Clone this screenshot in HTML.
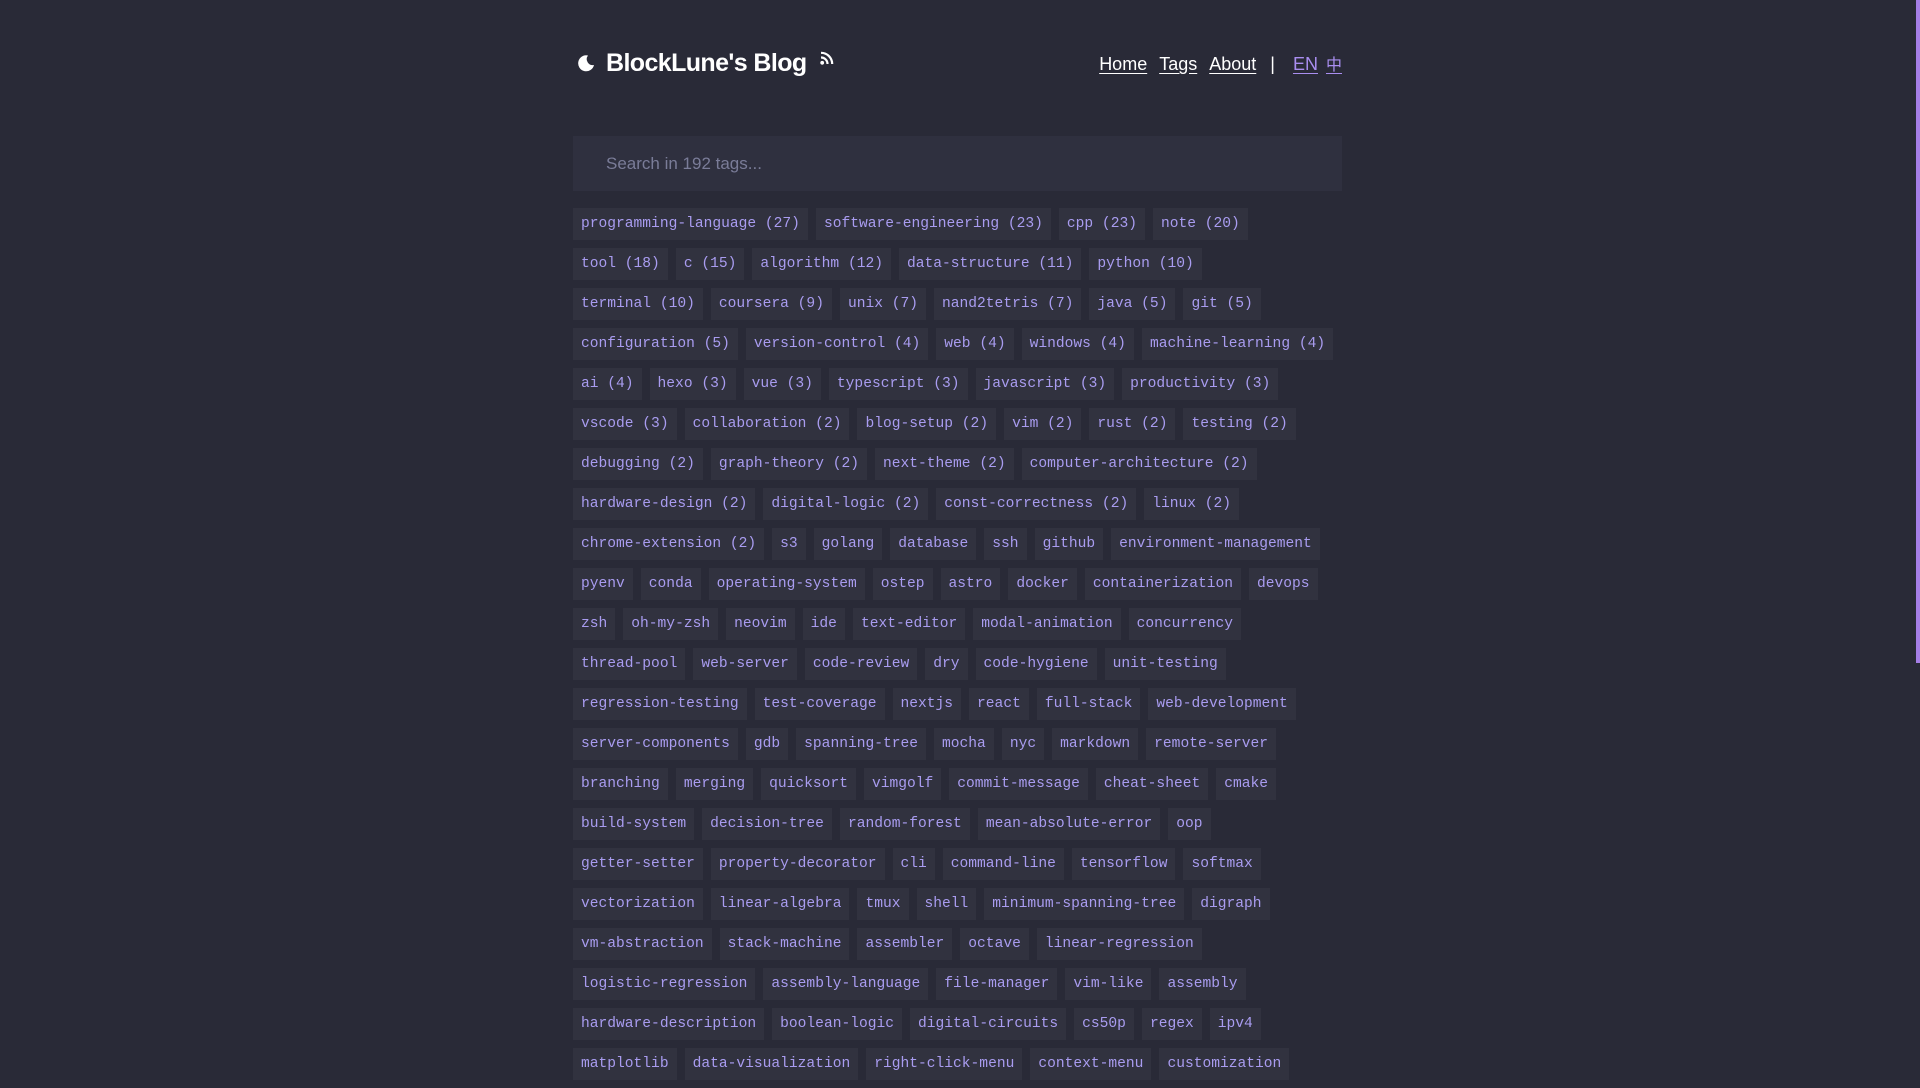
<!DOCTYPE html>
<html><head><meta charset="utf-8"><style>
html,body{margin:0;padding:0;background:#292a37;width:1920px;height:1079px;overflow:hidden}
body{font-family:"Liberation Sans",sans-serif}
.sb{position:absolute;right:0;top:0;width:4px;height:663px;background:#a57ee6}
.hdr{position:absolute;left:573px;top:40px;width:769px;height:50px}
.title{position:absolute;left:33px;top:9px;font-size:25px;font-weight:bold;color:#fff;letter-spacing:-0.6px}
.moon{position:absolute;left:4px;top:14px}
.rss{position:absolute;left:247px;top:11px}
.nav{position:absolute;right:0;top:11px;font-size:18px;color:#fff}
.nav a{color:#fff;text-decoration:underline;text-underline-offset:3px;margin-left:12px}
.nav a.l{color:#a98ef0;margin-left:8px}
.nav span{margin-left:14px}
.search{position:absolute;left:573px;top:136px;width:769px;height:55px;background:#2f303f;box-sizing:border-box;padding-left:33px;line-height:55px;font-size:17px;color:#7a7c98}
.tags{position:absolute;left:573px;top:208px;width:780px}
.row{height:32px;margin-bottom:8px;white-space:nowrap;display:flex}
.t{height:32px;line-height:33px;padding:0 8px;margin-right:8px;background:#31323f;color:#a99cf0;font-family:"Liberation Mono",monospace;font-size:14.6px}
</style></head><body>
<div class="sb"></div>
<div class="hdr">
<svg class="moon" width="18" height="18" viewBox="0 0 18 18"><path d="M11 1.5A8 8 0 1 0 17 11 6 6 0 0 1 11 1.5Z" fill="#fff"/></svg>
<div class="title">BlockLune's Blog</div>
<svg class="rss" width="14" height="14" viewBox="0 0 14 14"><circle cx="2.2" cy="11.8" r="1.9" fill="#fff"/><path d="M1 6.5a6.5 6.5 0 0 1 6.5 6.5M1 1.8A11.2 11.2 0 0 1 12.2 13" stroke="#fff" stroke-width="2.2" fill="none"/></svg>
<div class="nav"><a>Home</a><a>Tags</a><a>About</a><span>|</span><a class="l" style="margin-left:18px">EN</a><a class="l" style="font-family:'Noto Sans CJK SC',sans-serif;font-size:16px">中</a></div>
</div>
<div class="search">Search in 192 tags...</div>
<div class="tags">
<div class="row"><span class="t">programming-language (27)</span><span class="t">software-engineering (23)</span><span class="t">cpp (23)</span><span class="t">note (20)</span></div>
<div class="row"><span class="t">tool (18)</span><span class="t">c (15)</span><span class="t">algorithm (12)</span><span class="t">data-structure (11)</span><span class="t">python (10)</span></div>
<div class="row"><span class="t">terminal (10)</span><span class="t">coursera (9)</span><span class="t">unix (7)</span><span class="t">nand2tetris (7)</span><span class="t">java (5)</span><span class="t">git (5)</span></div>
<div class="row"><span class="t">configuration (5)</span><span class="t">version-control (4)</span><span class="t">web (4)</span><span class="t">windows (4)</span><span class="t">machine-learning (4)</span></div>
<div class="row"><span class="t">ai (4)</span><span class="t">hexo (3)</span><span class="t">vue (3)</span><span class="t">typescript (3)</span><span class="t">javascript (3)</span><span class="t">productivity (3)</span></div>
<div class="row"><span class="t">vscode (3)</span><span class="t">collaboration (2)</span><span class="t">blog-setup (2)</span><span class="t">vim (2)</span><span class="t">rust (2)</span><span class="t">testing (2)</span></div>
<div class="row"><span class="t">debugging (2)</span><span class="t">graph-theory (2)</span><span class="t">next-theme (2)</span><span class="t">computer-architecture (2)</span></div>
<div class="row"><span class="t">hardware-design (2)</span><span class="t">digital-logic (2)</span><span class="t">const-correctness (2)</span><span class="t">linux (2)</span></div>
<div class="row"><span class="t">chrome-extension (2)</span><span class="t">s3</span><span class="t">golang</span><span class="t">database</span><span class="t">ssh</span><span class="t">github</span><span class="t">environment-management</span></div>
<div class="row"><span class="t">pyenv</span><span class="t">conda</span><span class="t">operating-system</span><span class="t">ostep</span><span class="t">astro</span><span class="t">docker</span><span class="t">containerization</span><span class="t">devops</span></div>
<div class="row"><span class="t">zsh</span><span class="t">oh-my-zsh</span><span class="t">neovim</span><span class="t">ide</span><span class="t">text-editor</span><span class="t">modal-animation</span><span class="t">concurrency</span></div>
<div class="row"><span class="t">thread-pool</span><span class="t">web-server</span><span class="t">code-review</span><span class="t">dry</span><span class="t">code-hygiene</span><span class="t">unit-testing</span></div>
<div class="row"><span class="t">regression-testing</span><span class="t">test-coverage</span><span class="t">nextjs</span><span class="t">react</span><span class="t">full-stack</span><span class="t">web-development</span></div>
<div class="row"><span class="t">server-components</span><span class="t">gdb</span><span class="t">spanning-tree</span><span class="t">mocha</span><span class="t">nyc</span><span class="t">markdown</span><span class="t">remote-server</span></div>
<div class="row"><span class="t">branching</span><span class="t">merging</span><span class="t">quicksort</span><span class="t">vimgolf</span><span class="t">commit-message</span><span class="t">cheat-sheet</span><span class="t">cmake</span></div>
<div class="row"><span class="t">build-system</span><span class="t">decision-tree</span><span class="t">random-forest</span><span class="t">mean-absolute-error</span><span class="t">oop</span></div>
<div class="row"><span class="t">getter-setter</span><span class="t">property-decorator</span><span class="t">cli</span><span class="t">command-line</span><span class="t">tensorflow</span><span class="t">softmax</span></div>
<div class="row"><span class="t">vectorization</span><span class="t">linear-algebra</span><span class="t">tmux</span><span class="t">shell</span><span class="t">minimum-spanning-tree</span><span class="t">digraph</span></div>
<div class="row"><span class="t">vm-abstraction</span><span class="t">stack-machine</span><span class="t">assembler</span><span class="t">octave</span><span class="t">linear-regression</span></div>
<div class="row"><span class="t">logistic-regression</span><span class="t">assembly-language</span><span class="t">file-manager</span><span class="t">vim-like</span><span class="t">assembly</span></div>
<div class="row"><span class="t">hardware-description</span><span class="t">boolean-logic</span><span class="t">digital-circuits</span><span class="t">cs50p</span><span class="t">regex</span><span class="t">ipv4</span></div>
<div class="row"><span class="t">matplotlib</span><span class="t">data-visualization</span><span class="t">right-click-menu</span><span class="t">context-menu</span><span class="t">customization</span></div>
</div>
</body></html>
